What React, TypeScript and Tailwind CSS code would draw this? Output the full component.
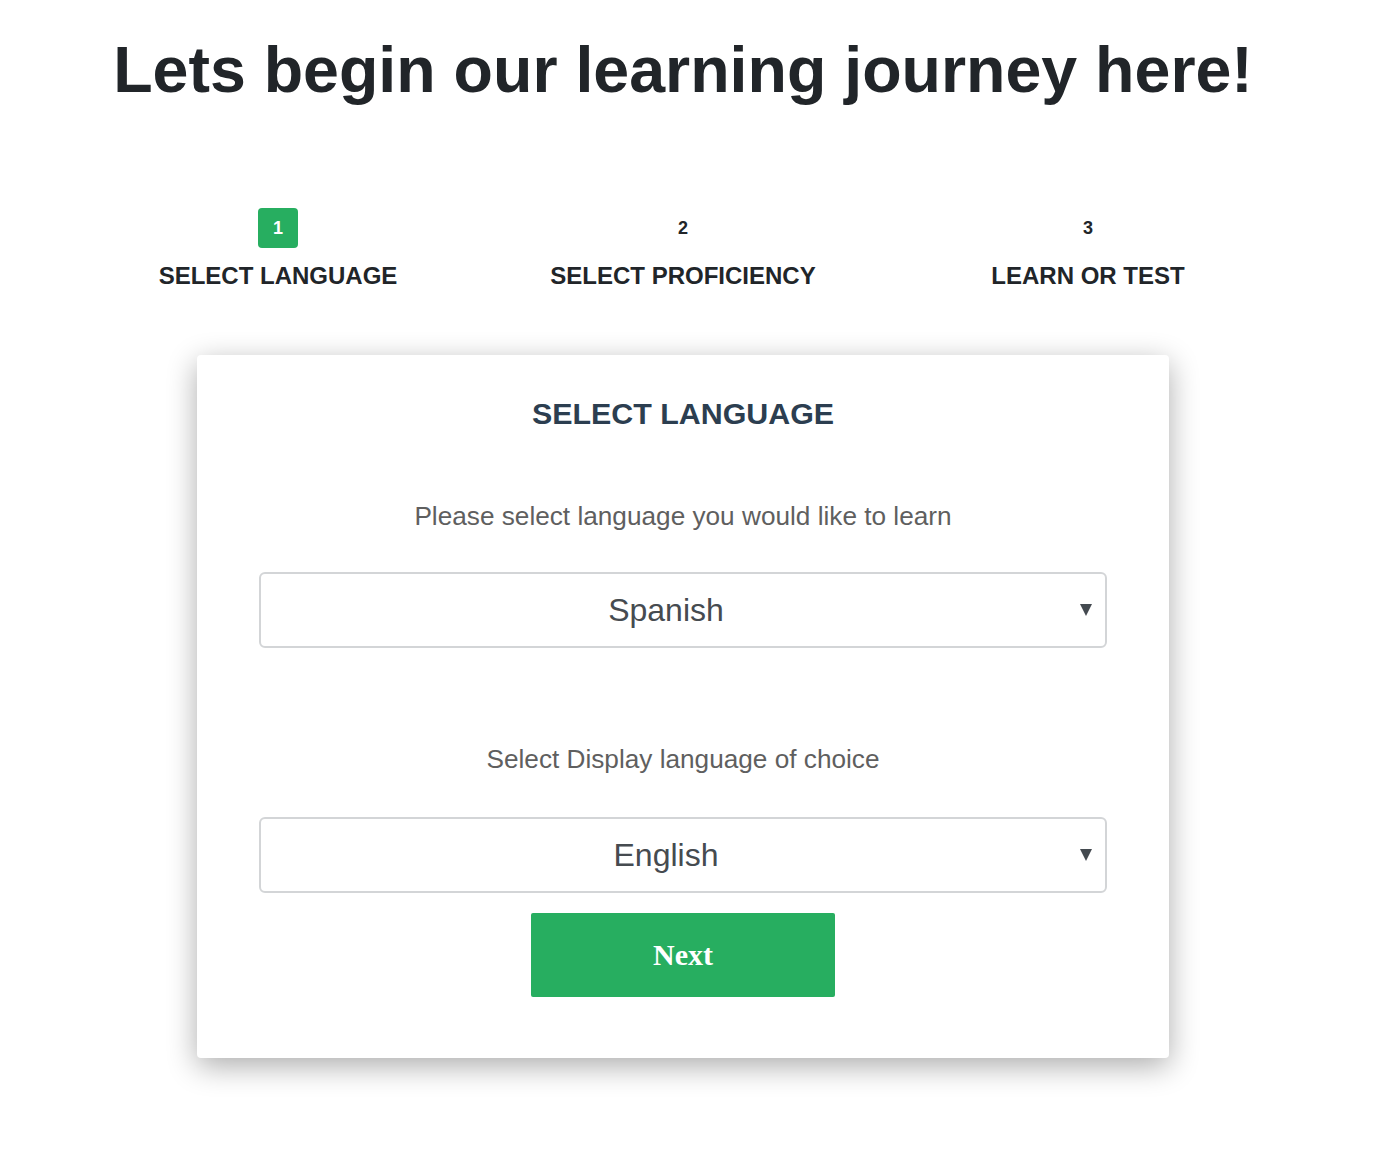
import React from 'react'

type Step = {
  num: string
  label: string
  active?: boolean
}

const steps: Step[] = [
  { num: '1', label: 'SELECT LANGUAGE', active: true },
  { num: '2', label: 'SELECT PROFICIENCY' },
  { num: '3', label: 'LEARN OR TEST' },
]

function Arrow() {
  return (
    <svg width="12" height="12" viewBox="0 0 12 12" className="ml-[9px] mr-[13px] shrink-0">
      <path d="M0 0 L12 0 L6 12 Z" fill="#444a50" />
    </svg>
  )
}

function SelectBox({ value }: { value: string }) {
  return (
    <div className="flex h-[76px] w-full items-center rounded-[6px] border-2 border-[#d3d5d7] bg-white">
      <span className="flex-1 text-center text-[32px] leading-none text-[#464b50]">
        {value}
      </span>
      <Arrow />
    </div>
  )
}

export default function App() {
  return (
    <main className="min-h-screen bg-white font-['Liberation_Sans',Arial,sans-serif]">
      <div className="w-[1366px] pb-[80px]">
        <h1 className="pt-[32px] text-center text-[64.5px] font-bold leading-[1.2] text-[#212529]">
          Lets begin our learning journey here!
        </h1>

        <div className="mx-auto mt-[99px] grid w-[1215px] grid-cols-3">
          {steps.map((step) => (
            <div key={step.num} className="flex flex-col items-center">
              {step.active ? (
                <div className="flex h-[40px] w-[40px] items-center justify-center rounded-[4px] bg-[#27ae60] text-[18px] font-bold text-white">
                  {step.num}
                </div>
              ) : (
                <div className="flex h-[40px] items-center justify-center text-[18px] font-bold text-[#212529]">
                  {step.num}
                </div>
              )}
              <p className="mt-[14px] text-[24px] font-bold leading-[1.2] text-[#212529]">
                {step.label}
              </p>
            </div>
          ))}
        </div>

        <div className="mx-auto mt-[64px] w-[972px] rounded-[4px] bg-white px-[62px] pb-[61px] pt-[40px] shadow-[0_8px_30px_rgba(0,0,0,0.33)]">
          <h2 className="text-center text-[30.4px] font-bold leading-[1.2] text-[#2c3e50]">
            SELECT LANGUAGE
          </h2>

          <p className="mt-[69px] text-center text-[26.2px] leading-[1.2] text-[#5f5f5f]">
            Please select language you would like to learn
          </p>

          <div className="mt-[40px]">
            <SelectBox value="Spanish" />
          </div>

          <p className="mt-[96px] text-center text-[26.2px] leading-[1.2] text-[#5f5f5f]">
            Select Display language of choice
          </p>

          <div className="mt-[41px]">
            <SelectBox value="English" />
          </div>

          <div className="mt-[20px] flex justify-center">
            <button className="h-[84px] w-[304px] rounded-[2px] bg-[#27ae60] font-['Liberation_Serif','Times_New_Roman',serif] text-[30px] font-bold text-white">
              Next
            </button>
          </div>
        </div>
      </div>
    </main>
  )
}
